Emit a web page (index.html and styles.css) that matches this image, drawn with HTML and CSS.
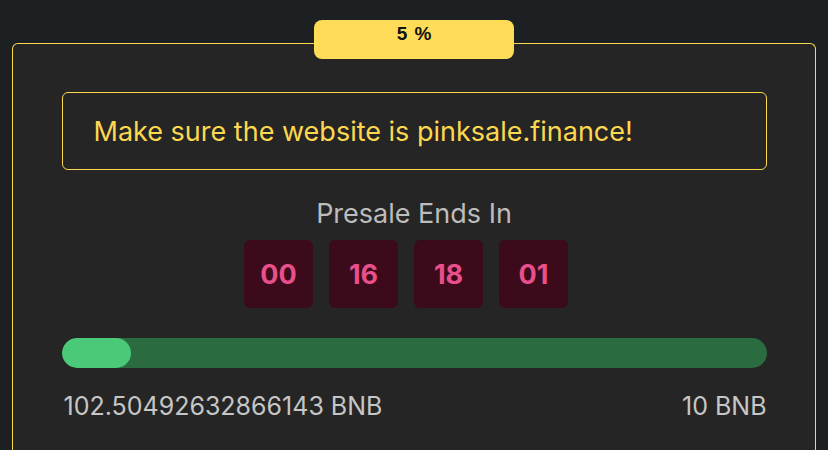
FILE: index.html
```html
<!DOCTYPE html>
<html lang="en">
<head>
    <meta charset="UTF-8">
    <meta name="viewport" content="width=device-width, initial-scale=1.0">
    <title>Presale</title>
    <link rel="stylesheet" href="styles.css">
</head>
<body>
    <div class="card">
        <div class="badge">5 %</div>
        <div class="notice">Make sure the website is pinksale.finance!</div>
        <div class="countdown">
            <div class="countdown-title">Presale Ends In</div>
            <div class="countdown-boxes">
                <div class="time-box">00</div>
                <div class="time-box">16</div>
                <div class="time-box">18</div>
                <div class="time-box">01</div>
            </div>
        </div>
        <div class="progress">
            <div class="progress-fill" style="width: 9.8%"></div>
        </div>
        <div class="progress-labels">
            <span>102.50492632866143 BNB</span>
            <span>10 BNB</span>
        </div>
    </div>
</body>
</html>
```

FILE: styles.css
```css
body {
    margin: 0;
    padding-top: 43px;
    height: 450px;
    box-sizing: border-box;
    overflow: hidden;
    font-family: Inter, "Noto Sans", sans-serif;
    background-color: #1d2022;
}
.card {
    position: relative;
    margin: 0 12px;
    height: 100%;
    box-sizing: border-box;
    padding: 48px 48.5px 0;
    background-color: #252525;
    border: 1.5px solid #fcd84f;
    border-bottom: none;
    border-radius: 6px 6px 0 0;
}
.badge {
    position: absolute;
    top: -24px;
    left: 301px;
    width: 200px;
    height: 39px;
    padding-top: 3px;
    box-sizing: border-box;
    background-color: #ffdc57;
    border-radius: 8px;
    text-align: center;
    font-family: "Liberation Sans", Arial, sans-serif;
    font-weight: bold;
    font-size: 19px;
    line-height: 22px;
    word-spacing: 2px;
    color: #111;
}
.notice {
    display: flex;
    align-items: center;
    height: 78px;
    box-sizing: border-box;
    padding-left: 31px;
    border: 1.5px solid #fcd84f;
    border-radius: 6px;
    color: #fcd84f;
    font-size: 27px;
}
.countdown {
    display: flex;
    flex-direction: column;
    align-items: center;
    margin-top: 28px;
}
.countdown-title {
    color: #bcbcbc;
    font-size: 27px;
    line-height: 32px;
}
.countdown-boxes {
    display: flex;
    margin-top: 10px;
    padding-right: 16px;
}
.time-box {
    display: flex;
    align-items: center;
    justify-content: center;
    width: 69px;
    height: 68px;
    margin-right: 16px;
    background-color: #3b0a1b;
    border-radius: 6px;
    color: #e84f8b;
    font-size: 27px;
    font-weight: bold;
}
.time-box:last-child {
    margin-right: 0;
}
.progress {
    margin-top: 30px;
    height: 30px;
    background-color: #2b6b40;
    border-radius: 15px;
    overflow: hidden;
}
.progress-fill {
    height: 100%;
    background-color: #4aca78;
    border-radius: 15px;
}
.progress-labels {
    display: flex;
    justify-content: space-between;
    margin-top: 23px;
    padding-left: 2px;
    color: #c6c6c6;
    font-size: 25px;
    line-height: 30px;
}
```
